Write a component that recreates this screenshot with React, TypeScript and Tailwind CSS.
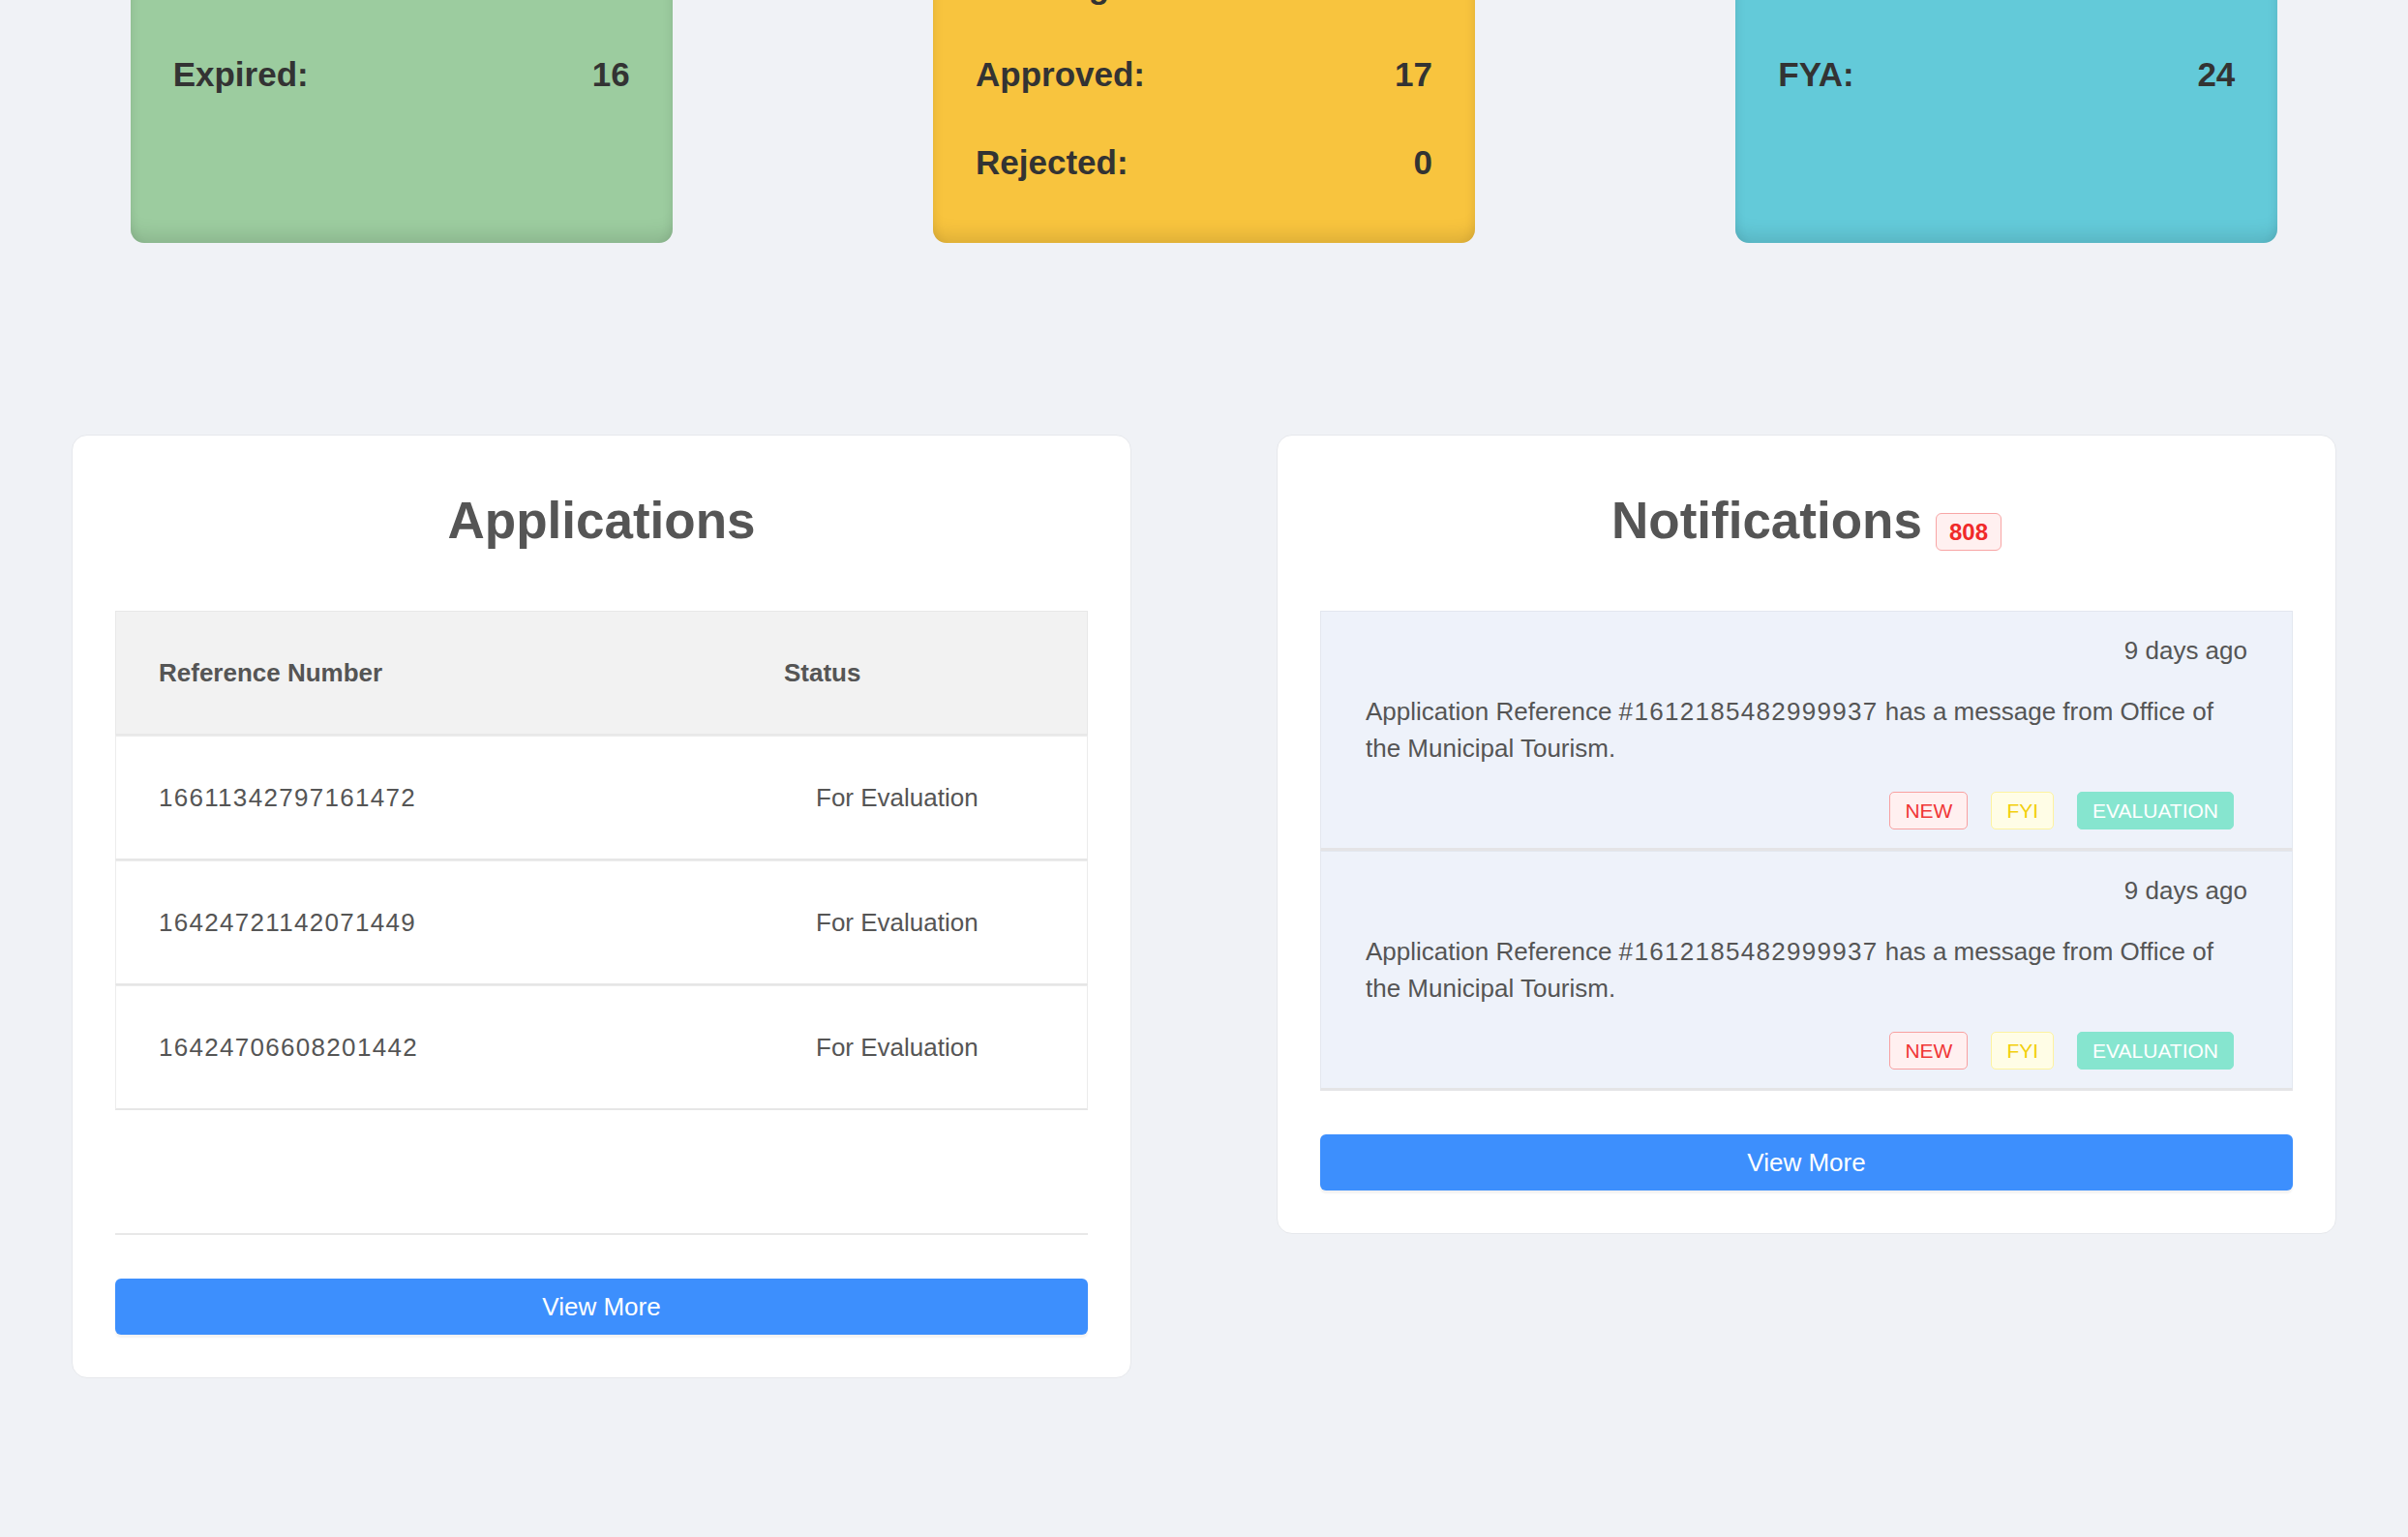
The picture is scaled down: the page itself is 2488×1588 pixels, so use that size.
import React from 'react';

type Stat = { label: string; value: number };

const statCards: { color: string; rows: Stat[] }[] = [
    {
        color: 'bg-[#9ccc9f]',
        rows: [
            { label: 'Active:', value: 41 },
            { label: 'Expired:', value: 16 },
        ],
    },
    {
        color: 'bg-[#f8c43e]',
        rows: [
            { label: 'Pending:', value: 38 },
            { label: 'Approved:', value: 17 },
            { label: 'Rejected:', value: 0 },
        ],
    },
    {
        color: 'bg-[#63cad9]',
        rows: [
            { label: 'FYI:', value: 11 },
            { label: 'FYA:', value: 24 },
        ],
    },
];

const applications = [
    { ref: '16611342797161472', status: 'For Evaluation' },
    { ref: '16424721142071449', status: 'For Evaluation' },
    { ref: '16424706608201442', status: 'For Evaluation' },
];

const notifications = [
    { id: 1, ago: '9 days ago', ref: '1612185482999937', office: 'Office of the Municipal Tourism' },
    { id: 2, ago: '9 days ago', ref: '1612185482999937', office: 'Office of the Municipal Tourism' },
];

function StatCard({ color, rows }: { color: string; rows: Stat[] }) {
    return (
        <div
            className={`${color} justify-self-center w-[560px] rounded-[14px] pt-[41px] pb-[37px] px-[44px] shadow-[inset_0_-22px_20px_-16px_rgba(0,0,0,0.13),inset_12px_0_12px_-12px_rgba(0,0,0,0.1),inset_-12px_0_12px_-12px_rgba(0,0,0,0.1)]`}
        >
            {rows.map((r) => (
                <div key={r.label} className="h-[91px] flex items-center justify-between text-[35px] font-bold text-[#333]">
                    <span>{r.label}</span>
                    <span>{r.value}</span>
                </div>
            ))}
        </div>
    );
}

function PanelTitle({ children }: { children: React.ReactNode }) {
    return <h2 className="h-[64px] leading-[64px] text-[53px] font-bold text-[#555]">{children}</h2>;
}

function ViewMore() {
    return (
        <button
            type="button"
            className="w-full h-[58px] rounded-[6px] bg-[#3d8ffd] text-white text-[26px] shadow-[0_3px_2px_rgba(0,0,0,0.05)]"
        >
            View More
        </button>
    );
}

export default function App() {
    return (
        <div className="min-h-screen overflow-hidden bg-[#f0f2f6] font-['Liberation_Sans',Arial,sans-serif]">
            {/* status cards, page is scrolled so their tops are cut off */}
            <div className="-mt-[100px] grid grid-cols-3">
                {statCards.map((c, i) => (
                    <StatCard key={i} color={c.color} rows={c.rows} />
                ))}
            </div>

            <div className="mt-[198px] grid grid-cols-2 items-start pb-[100px]">
                {/* Applications */}
                <div className="pl-[74px] pr-[75px]">
                    <div className="bg-white rounded-[16px] border border-[#e6e8ec] pt-[56px] px-[44px] pb-[44px]">
                        <div className="flex justify-center mb-[61px]">
                            <PanelTitle>Applications</PanelTitle>
                        </div>

                        <div className="text-[26px] text-[#555]">
                            <div className="h-[129px] flex items-center bg-[#f2f2f2] border border-[#e8e8e8] border-b-2 font-bold">
                                <div className="w-[690px] shrink-0 pl-[44px]">Reference Number</div>
                                <div>Status</div>
                            </div>
                            {applications.map((a) => (
                                <div
                                    key={a.ref}
                                    className="h-[129px] flex items-center bg-white border border-[#ececec] border-b-2 border-b-[#e6e6e6]"
                                >
                                    <div className="w-[690px] shrink-0 pl-[44px] tracking-[1.3px]">{a.ref}</div>
                                    <div className="pl-[33px]">{a.status}</div>
                                </div>
                            ))}
                        </div>

                        <div className="mt-[127px] mb-[45px] h-[2px] bg-[#e8e8e8]" />
                        <ViewMore />
                    </div>
                </div>

                {/* Notifications */}
                <div className="pl-[75px] pr-[74px]">
                    <div className="bg-white rounded-[16px] border border-[#e6e8ec] pt-[56px] px-[44px] pb-[44px]">
                        <div className="flex justify-center items-end gap-[14px] mb-[61px]">
                            <PanelTitle>Notifications</PanelTitle>
                            <span className="mb-[1px] h-[39px] px-[13px] flex items-center rounded-[6px] border border-[#f8a5a5] bg-[#fff0f0] text-[#f02a2a] text-[24px] font-bold">
                                808
                            </span>
                        </div>

                        <div className="text-[26px] text-[#555]">
                            {notifications.map((n) => (
                                <div
                                    key={n.id}
                                    className="bg-[#eef2fa] border border-[#e3e7ef] border-b-[3px] border-b-[#e4e4e6] pt-[21px] pb-[19px] px-[46px]"
                                >
                                    <div className="text-right leading-[38px]">{n.ago}</div>
                                    <p className="mt-[25px] mr-[30px] leading-[38px]">
                                        Application Reference <span className="tracking-[1.3px]">#{n.ref}</span> has a message
                                        from {n.office}.
                                    </p>
                                    <div className="mt-[26px] mr-[14px] flex justify-end gap-[24px] text-[21px]">
                                        <span className="h-[39px] px-[15px] flex items-center rounded-[5px] border border-[#f8a0a0] bg-[#fff0f0] text-[#f03636]">
                                            NEW
                                        </span>
                                        <span className="h-[39px] px-[15px] flex items-center rounded-[5px] border border-[#fdf3a0] bg-[#fffde6] text-[#f2cf0c]">
                                            FYI
                                        </span>
                                        <span className="h-[39px] px-[15px] flex items-center rounded-[5px] border border-[#86e5cf] bg-[#86e5cf] text-white">
                                            EVALUATION
                                        </span>
                                    </div>
                                </div>
                            ))}
                        </div>

                        <div className="mt-[45px]">
                            <ViewMore />
                        </div>
                    </div>
                </div>
            </div>
        </div>
    );
}
